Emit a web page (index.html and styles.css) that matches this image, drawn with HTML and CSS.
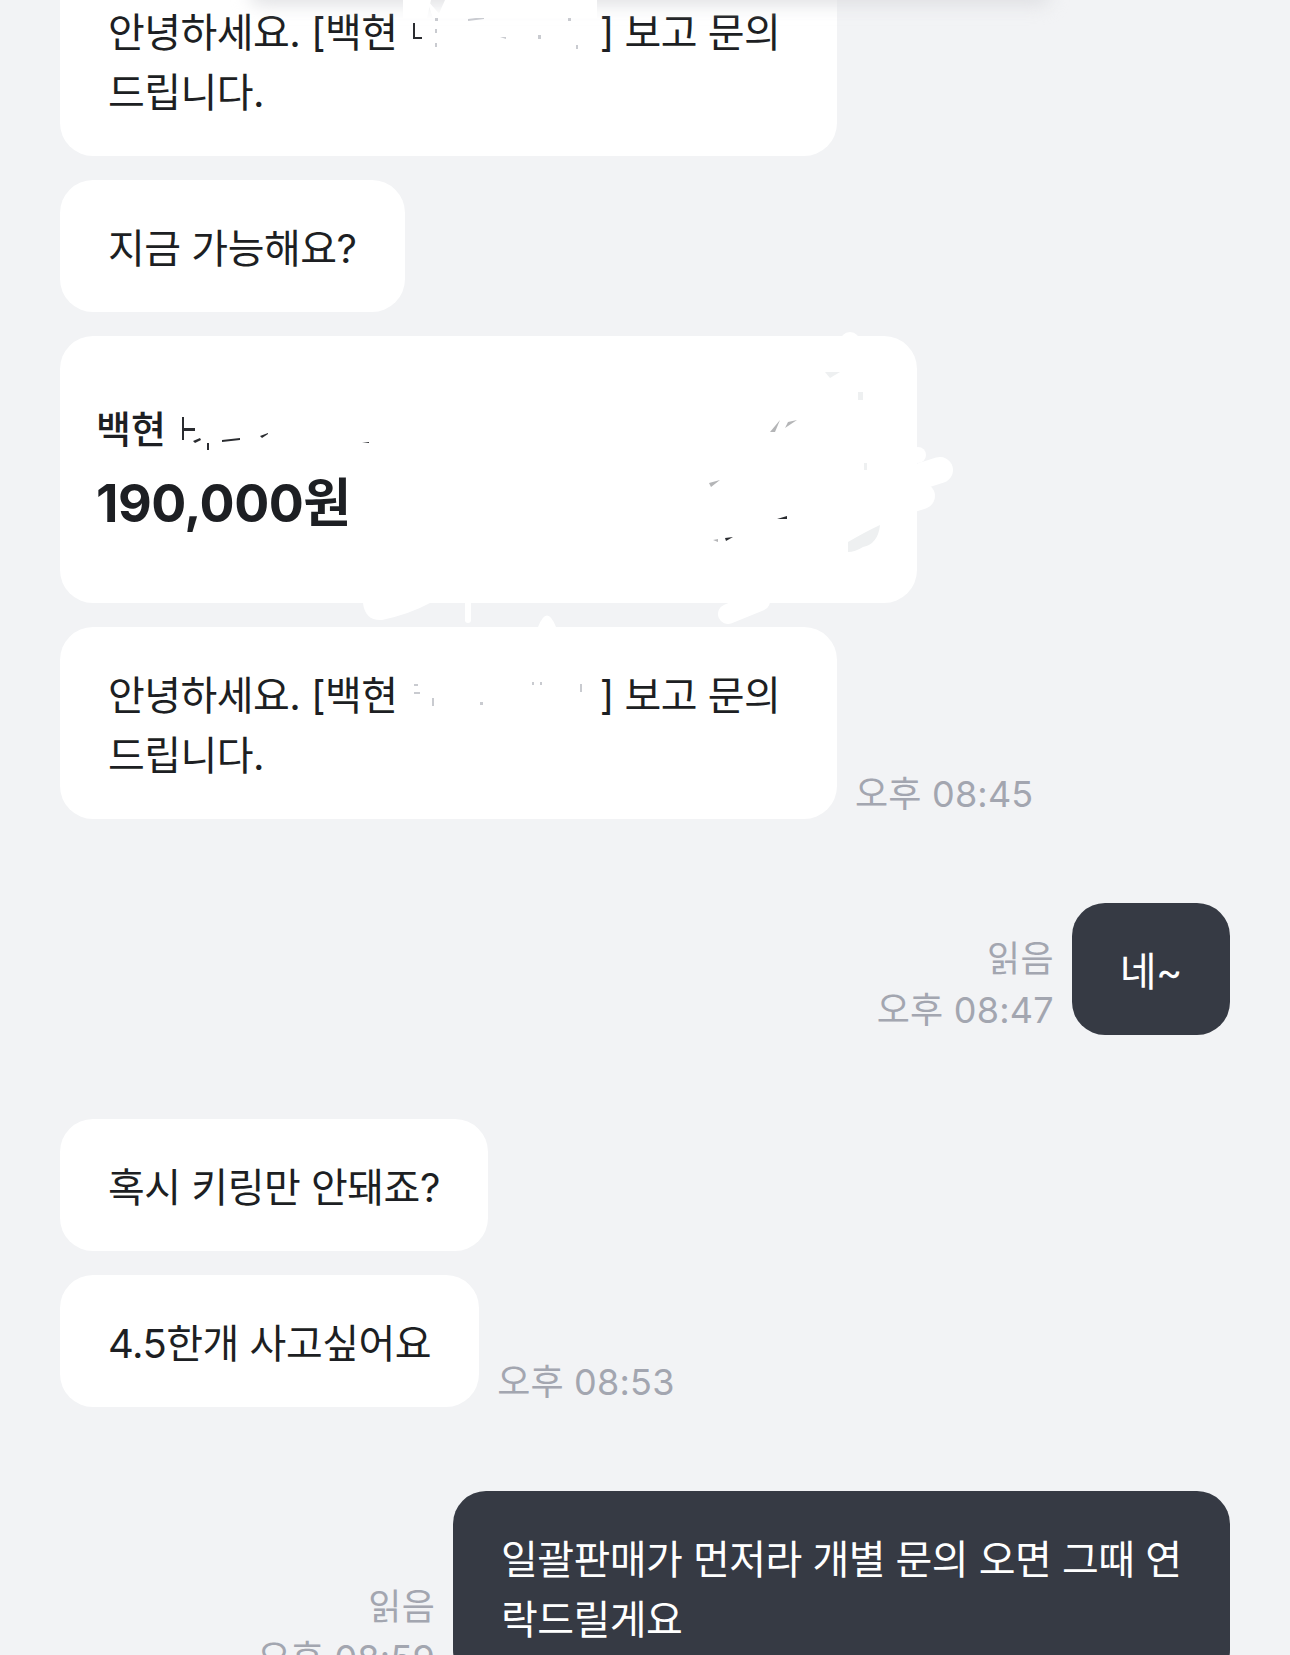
FILE: index.html
```html
<!DOCTYPE html>
<html lang="ko">
<head>
<meta charset="utf-8">
<title>채팅</title>
<link rel="stylesheet" href="styles.css">
</head>
<body>
<div class="topshade"></div>
<svg class="topscribble" viewBox="0 0 194 18" aria-hidden="true">
  <path class="blob" d="M0 0 H28 L24 18 H0 Z"/>
  <path class="blob" d="M42 0 H194 V18 H34 Z"/>
  <path class="blob" d="M24 0 L40 18 H30 Z"/>
</svg>
<main class="chat">
  <section class="group">
    <div class="row"><div class="bubble in wide">안녕하세요. [백현 <svg class="redact" viewBox="0 0 181 40" aria-hidden="true"><path class="mark" d="M5 8 H7 V22 H14 V24 H5 Z"/><path class="mark-soft" d="M27 2 H30 V6 H27 Z M27 14 H29 V18 H27 Z M27 28 H29 V32 H27 Z M60 4 L76 2 V4 L60 6 Z M92 22 L98 22 L98 24 Z M130 20 H133 V24 H130 Z M160 2 H163 V6 H160 Z M168 30 H170 V34 H168 Z"/></svg> ] 보고 문의 드립니다.</div></div>
    <div class="row"><div class="bubble in">지금 가능해요?</div></div>
    <div class="row">
      <div class="card">
        <div class="card-title">백현</div>
        <div class="card-price">190,000원</div>
        <svg class="scribble" viewBox="0 0 857 267" aria-hidden="true">
          <circle class="blob" cx="790" cy="6" r="10"/>
          <circle class="blob" cx="858" cy="119" r="8"/>
          <path class="stroke wide-stroke" d="M830 150 L880 134"/>
          <path class="stroke wide-stroke" d="M830 170 L862 160"/>
          <path class="stroke" d="M700 265 L668 278"/>
          <path class="blob" d="M303 267 Q305 285 322 284 Q350 278 370 267 Z"/>
          <path class="stick" d="M408 262 V284"/>
          <path class="blob" d="M478 291 Q487 268 496 291 Z"/>
          <path class="leaf" d="M788 206 Q805 196 820 189 Q818 208 803 211 Q795 216 788 216 Z"/>
          <path class="leaf" d="M765 36 H780 L770 42 Z M798 56 H803 V64 H798 Z M804 127 H807 V134 H804 Z"/>
          <path class="shard-grey" d="M649 147 L660 144 L651 151 Z M653 204 L658 203 V206 Z M710 96 L720 84 L715 96 Z M725 92 L737 84 L728 86 Z"/>
          <path class="shard-dark" d="M717 183 L727 180 V183 Z M665 202 L673 201 L666 205 Z"/>
          <path class="shard-dark" d="M122 81 H124 V92 H135 V95 H124 V104 H122 Z M133 105 L140 102 L141 104 L135 107 Z M147 107 H149 V114 H147 Z M162 104 L180 102 V104 L162 106 Z M200 100 L208 97 V98 L202 102 Z M302 107 L309 106 V107 H302 Z"/>
          <path class="blob" d="M84 111 H110 V118 H84 Z"/>
        </svg>
      </div>
    </div>
    <div class="row end">
      <div class="bubble in wide">안녕하세요. [백현 <svg class="redact" viewBox="0 0 181 40" aria-hidden="true"><path class="mark-soft" d="M6 6 H10 V8 H6 Z M6 14 H12 V16 H6 Z M24 20 H26 V28 H24 Z M72 24 H75 V27 H72 Z M124 4 H126 V7 H124 Z M132 4 H134 V7 H132 Z M172 6 H174 V14 H172 Z"/></svg> ] 보고 문의 드립니다.</div>
      <div class="meta"><time>오후 08:45</time></div>
    </div>
  </section>

  <section class="group">
    <div class="row mine end">
      <div class="meta right"><span>읽음</span><time>오후 08:47</time></div>
      <div class="bubble out">네~</div>
    </div>
  </section>

  <section class="group">
    <div class="row"><div class="bubble in">혹시 키링만 안돼죠?</div></div>
    <div class="row end">
      <div class="bubble in">4.5한개 사고싶어요</div>
      <div class="meta"><time>오후 08:53</time></div>
    </div>
  </section>

  <section class="group">
    <div class="row mine end">
      <div class="meta right"><span>읽음</span><time>오후 08:59</time></div>
      <div class="bubble out wide">일괄판매가 먼저라 개별 문의 오면 그때 연락드릴게요</div>
    </div>
  </section>
</main>
</body>
</html>
```
FILE: styles.css
```css
* { box-sizing: border-box; }
html, body { margin: 0; height: 1655px; overflow: hidden; }
body {
  background: #f2f3f5;
  color: #1d1f23;
  font-family: "Inter", "Noto Sans CJK KR", sans-serif;
  position: relative;
}
.topshade {
  position: absolute;
  z-index: 2;
  top: -14px;
  left: 250px;
  width: 800px;
  height: 18px;
  border-radius: 12px;
  background: #dcdde0;
  filter: blur(9px);
}
.topscribble {
  position: absolute;
  z-index: 3;
  top: 0;
  left: 403px;
  width: 194px;
  height: 18px;
}
.chat {
  display: flex;
  flex-direction: column;
  gap: 84px;
  padding: 0 60px;
  margin-top: -36px;
}
.group { display: flex; flex-direction: column; gap: 24px; }
.row { display: flex; gap: 18px; }
.row.end { align-items: flex-end; }
.row.mine { justify-content: flex-end; }
.bubble {
  font-size: 40px;
  line-height: 60px;
  letter-spacing: -0.5px;
  padding: 39px 48px 33px;
  border-radius: 33px;
  font-weight: 400;
}
.bubble.wide { width: 777px; padding-right: 42px; letter-spacing: -0.55px; }
.in { background: #fff; }
.out { background: #363a44; color: #fff; }
.redact { width: 181px; height: 40px; vertical-align: -8px; }
.mark { fill: #2a2c30; }
.mark-soft { fill: #c9cbd0; }
.meta {
  display: flex;
  flex-direction: column;
  font-size: 36px;
  line-height: 51px;
  margin-bottom: -1px;
  color: #a3a6b0;
  font-weight: 400;
  letter-spacing: 0.2px;
  white-space: nowrap;
}
.meta.right { align-items: flex-end; }
.card {
  position: relative;
  width: 857px;
  height: 267px;
  padding: 68px 36px 0;
  background: #fff;
  border-radius: 33px;
}
.card-title { font-size: 38px; line-height: 50px; font-weight: 500; }
.card-price { font-size: 52px; line-height: 72px; font-weight: 700; margin-top: 14px; letter-spacing: -0.5px; }
.scribble { position: absolute; left: 0; top: 0; width: 857px; height: 267px; overflow: visible; }
.blob { fill: #fff; }
.stroke { stroke: #fff; stroke-width: 20; stroke-linecap: round; fill: none; }
.wide-stroke { stroke-width: 26; }
.stick { stroke: #fff; stroke-width: 6; stroke-linecap: round; fill: none; }
.leaf { fill: #eef0f1; }
.shard-grey { fill: #b4b5b7; }
.shard-dark { fill: #2a2c30; }
```
